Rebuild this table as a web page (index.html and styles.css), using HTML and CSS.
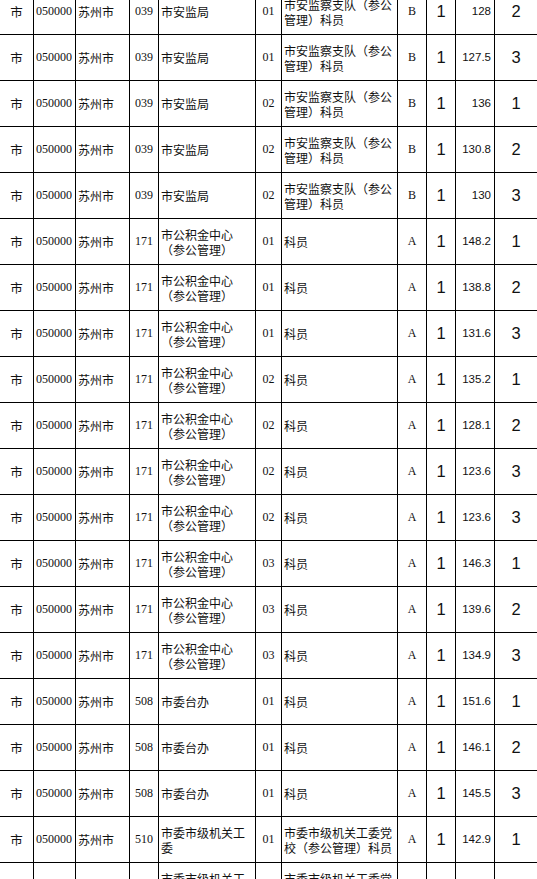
FILE: index.html
```html
<!DOCTYPE html>
<html lang="zh-CN">
<head>
<meta charset="utf-8">
<title>职位成绩表</title>
<link rel="stylesheet" href="styles.css">
</head>
<body>
<div class="sheet">
  <div class="row">
    <div class="c lvl">市</div><div class="c code">050000</div><div class="c city">苏州市</div><div class="c ser">039</div><div class="c dept">市安监局</div><div class="c ser">01</div><div class="c pos">市安监察支队（参公管理）科员</div><div class="c ser">B</div><div class="c num">1</div><div class="c score">128</div><div class="c num last">2</div>
  </div>
  <div class="row">
    <div class="c lvl">市</div><div class="c code">050000</div><div class="c city">苏州市</div><div class="c ser">039</div><div class="c dept">市安监局</div><div class="c ser">01</div><div class="c pos">市安监察支队（参公管理）科员</div><div class="c ser">B</div><div class="c num">1</div><div class="c score">127.5</div><div class="c num last">3</div>
  </div>
  <div class="row">
    <div class="c lvl">市</div><div class="c code">050000</div><div class="c city">苏州市</div><div class="c ser">039</div><div class="c dept">市安监局</div><div class="c ser">02</div><div class="c pos">市安监察支队（参公管理）科员</div><div class="c ser">B</div><div class="c num">1</div><div class="c score">136</div><div class="c num last">1</div>
  </div>
  <div class="row">
    <div class="c lvl">市</div><div class="c code">050000</div><div class="c city">苏州市</div><div class="c ser">039</div><div class="c dept">市安监局</div><div class="c ser">02</div><div class="c pos">市安监察支队（参公管理）科员</div><div class="c ser">B</div><div class="c num">1</div><div class="c score">130.8</div><div class="c num last">2</div>
  </div>
  <div class="row">
    <div class="c lvl">市</div><div class="c code">050000</div><div class="c city">苏州市</div><div class="c ser">039</div><div class="c dept">市安监局</div><div class="c ser">02</div><div class="c pos">市安监察支队（参公管理）科员</div><div class="c ser">B</div><div class="c num">1</div><div class="c score">130</div><div class="c num last">3</div>
  </div>
  <div class="row">
    <div class="c lvl">市</div><div class="c code">050000</div><div class="c city">苏州市</div><div class="c ser">171</div><div class="c dept">市公积金中心（参公管理）</div><div class="c ser">01</div><div class="c pos">科员</div><div class="c ser">A</div><div class="c num">1</div><div class="c score">148.2</div><div class="c num last">1</div>
  </div>
  <div class="row">
    <div class="c lvl">市</div><div class="c code">050000</div><div class="c city">苏州市</div><div class="c ser">171</div><div class="c dept">市公积金中心（参公管理）</div><div class="c ser">01</div><div class="c pos">科员</div><div class="c ser">A</div><div class="c num">1</div><div class="c score">138.8</div><div class="c num last">2</div>
  </div>
  <div class="row">
    <div class="c lvl">市</div><div class="c code">050000</div><div class="c city">苏州市</div><div class="c ser">171</div><div class="c dept">市公积金中心（参公管理）</div><div class="c ser">01</div><div class="c pos">科员</div><div class="c ser">A</div><div class="c num">1</div><div class="c score">131.6</div><div class="c num last">3</div>
  </div>
  <div class="row">
    <div class="c lvl">市</div><div class="c code">050000</div><div class="c city">苏州市</div><div class="c ser">171</div><div class="c dept">市公积金中心（参公管理）</div><div class="c ser">02</div><div class="c pos">科员</div><div class="c ser">A</div><div class="c num">1</div><div class="c score">135.2</div><div class="c num last">1</div>
  </div>
  <div class="row">
    <div class="c lvl">市</div><div class="c code">050000</div><div class="c city">苏州市</div><div class="c ser">171</div><div class="c dept">市公积金中心（参公管理）</div><div class="c ser">02</div><div class="c pos">科员</div><div class="c ser">A</div><div class="c num">1</div><div class="c score">128.1</div><div class="c num last">2</div>
  </div>
  <div class="row">
    <div class="c lvl">市</div><div class="c code">050000</div><div class="c city">苏州市</div><div class="c ser">171</div><div class="c dept">市公积金中心（参公管理）</div><div class="c ser">02</div><div class="c pos">科员</div><div class="c ser">A</div><div class="c num">1</div><div class="c score">123.6</div><div class="c num last">3</div>
  </div>
  <div class="row">
    <div class="c lvl">市</div><div class="c code">050000</div><div class="c city">苏州市</div><div class="c ser">171</div><div class="c dept">市公积金中心（参公管理）</div><div class="c ser">02</div><div class="c pos">科员</div><div class="c ser">A</div><div class="c num">1</div><div class="c score">123.6</div><div class="c num last">3</div>
  </div>
  <div class="row">
    <div class="c lvl">市</div><div class="c code">050000</div><div class="c city">苏州市</div><div class="c ser">171</div><div class="c dept">市公积金中心（参公管理）</div><div class="c ser">03</div><div class="c pos">科员</div><div class="c ser">A</div><div class="c num">1</div><div class="c score">146.3</div><div class="c num last">1</div>
  </div>
  <div class="row">
    <div class="c lvl">市</div><div class="c code">050000</div><div class="c city">苏州市</div><div class="c ser">171</div><div class="c dept">市公积金中心（参公管理）</div><div class="c ser">03</div><div class="c pos">科员</div><div class="c ser">A</div><div class="c num">1</div><div class="c score">139.6</div><div class="c num last">2</div>
  </div>
  <div class="row">
    <div class="c lvl">市</div><div class="c code">050000</div><div class="c city">苏州市</div><div class="c ser">171</div><div class="c dept">市公积金中心（参公管理）</div><div class="c ser">03</div><div class="c pos">科员</div><div class="c ser">A</div><div class="c num">1</div><div class="c score">134.9</div><div class="c num last">3</div>
  </div>
  <div class="row">
    <div class="c lvl">市</div><div class="c code">050000</div><div class="c city">苏州市</div><div class="c ser">508</div><div class="c dept">市委台办</div><div class="c ser">01</div><div class="c pos">科员</div><div class="c ser">A</div><div class="c num">1</div><div class="c score">151.6</div><div class="c num last">1</div>
  </div>
  <div class="row">
    <div class="c lvl">市</div><div class="c code">050000</div><div class="c city">苏州市</div><div class="c ser">508</div><div class="c dept">市委台办</div><div class="c ser">01</div><div class="c pos">科员</div><div class="c ser">A</div><div class="c num">1</div><div class="c score">146.1</div><div class="c num last">2</div>
  </div>
  <div class="row">
    <div class="c lvl">市</div><div class="c code">050000</div><div class="c city">苏州市</div><div class="c ser">508</div><div class="c dept">市委台办</div><div class="c ser">01</div><div class="c pos">科员</div><div class="c ser">A</div><div class="c num">1</div><div class="c score">145.5</div><div class="c num last">3</div>
  </div>
  <div class="row">
    <div class="c lvl">市</div><div class="c code">050000</div><div class="c city">苏州市</div><div class="c ser">510</div><div class="c dept">市委市级机关工委</div><div class="c ser">01</div><div class="c pos">市委市级机关工委党校（参公管理）科员</div><div class="c ser">A</div><div class="c num">1</div><div class="c score">142.9</div><div class="c num last">1</div>
  </div>
  <div class="row">
    <div class="c lvl">市</div><div class="c code">050000</div><div class="c city">苏州市</div><div class="c ser">510</div><div class="c dept">市委市级机关工委</div><div class="c ser">01</div><div class="c pos">市委市级机关工委党校（参公管理）科员</div><div class="c ser">A</div><div class="c num">1</div><div class="c score">138.4</div><div class="c num last">2</div>
  </div>
</div>
</body>
</html>
```
FILE: styles.css
```css
html, body {
  margin: 0;
  padding: 0;
  overflow: hidden;
  background: #fff;
}

body {
  font-family: "Noto Sans CJK SC", "Noto Sans", sans-serif;
  color: #111;
}

.sheet {
  margin-top: -11px;
  width: 537px;
  display: flex;
  flex-direction: column;
}

.row {
  display: grid;
  grid-template-columns: 34px 42px 54px 29px 97px 26px 116px 29px 29px 39px 42px;
  height: 46px;
}

.c {
  box-sizing: border-box;
  border-right: 1px solid #000;
  border-bottom: 1px solid #000;
  display: flex;
  align-items: center;
  overflow: hidden;
  font-size: 12px;
  line-height: 15px;
}

.c.last {
  border-right: none;
}

.lvl {
  justify-content: center;
  font-size: 12.5px;
}

.code {
  font-family: "Liberation Serif", serif;
  padding-left: 2px;
}

.city,
.dept,
.pos {
  padding-left: 2px;
  padding-right: 2px;
}

.ser {
  font-family: "Liberation Serif", serif;
  justify-content: center;
}

.num {
  font-family: "Liberation Sans", Arial, sans-serif;
  font-size: 16.5px;
  justify-content: center;
}

.score {
  font-family: "Liberation Sans", Arial, sans-serif;
  font-size: 11.5px;
  justify-content: flex-end;
  padding-right: 3px;
}
```
